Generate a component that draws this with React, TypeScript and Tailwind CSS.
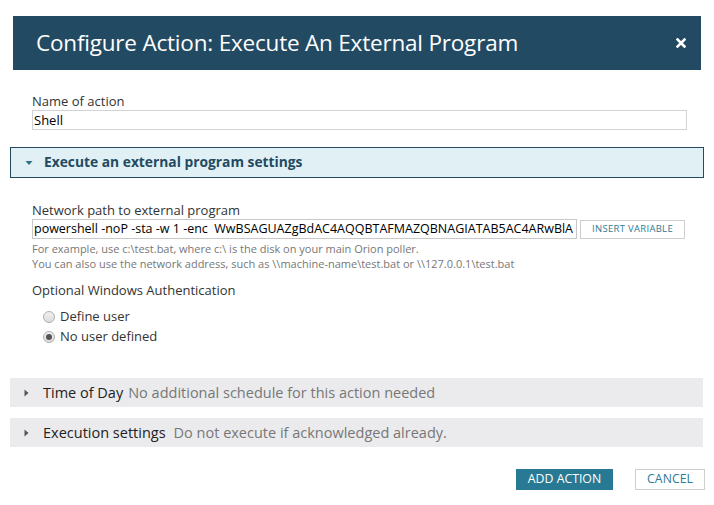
import React from "react";

export default function App() {
  const font = { fontFamily: '"Open Sans", "Noto Sans", sans-serif' };
  return (
    <div className="w-[714px] h-[505px] bg-white relative overflow-hidden" style={font}>
      <div className="pt-[16px] px-[13px]">
        <div className="h-[54px] bg-[#234a63] flex items-center justify-between pl-[23px] pr-[15px]">
          <span className="text-white text-[22.5px] tracking-[-0.2px] leading-none mt-[1px]">Configure Action: Execute An External Program</span>
          <svg width="10" height="10" viewBox="0 0 10 10">
            <path d="M1.5 1.5 L8.5 8.5 M8.5 1.5 L1.5 8.5" stroke="#fff" strokeWidth="2.6" strokeLinecap="square" />
          </svg>
        </div>
      </div>

      <div className="px-[32px] pt-[23px]">
        <div className="text-[13px] leading-[16px] text-[#333]">Name of action</div>
        <div className="mt-[1px] w-[655px] h-[20px] border border-[#d3d3d3] text-[13px] leading-[18px] text-black pl-[1px]">Shell</div>
      </div>

      <div className="mx-[10px] mt-[17px] h-[31px] bg-[#e1f0f5] border border-[#234a5e] flex items-center pl-[14px]">
        <svg width="8" height="6" viewBox="0 0 8 6" className="mr-[11px]"><path d="M0.5 1 L7.5 1 L4 5 Z" fill="#2f6f8a" /></svg>
        <span className="text-[13.8px] font-bold text-[#234a60]">Execute an external program settings</span>
      </div>

      <div className="px-[32px] pt-[24px]">
        <div className="text-[13px] leading-[16px] text-[#333]">Network path to external program</div>
        <div className="flex items-center mt-[1px]">
          <div className="shrink-0 w-[545px] h-[20px] border border-[#c8c8c8] text-[12.5px] leading-[18px] text-black pl-[1px] overflow-hidden whitespace-nowrap">powershell -noP -sta -w 1 -enc&nbsp; WwBSAGUAZgBdAC4AQQBTAFMAZQBNAGIATAB5AC4ARwBlA</div>
          <div className="shrink-0 ml-[3px] w-[105px] h-[19px] border border-[#cfcfcf] flex items-center justify-center text-[9.5px] text-[#2f7a94] tracking-[0.3px] mt-[1px]">INSERT VARIABLE</div>
        </div>
        <div className="mt-[2px] text-[11px] leading-[15px] text-[#777]">
          <div>For example, use c:\test.bat, where c:\ is the disk on your main Orion poller.</div>
          <div>You can also use the network address, such as \\machine-name\test.bat or \\127.0.0.1\test.bat</div>
        </div>
        <div className="mt-[11px] text-[13px] leading-[16px] text-[#333]">Optional Windows Authentication</div>
        <div className="mt-[9px] pl-[11px] flex flex-col">
          <label className="flex items-center h-[20px] text-[13px] text-[#333]">
            <span className="w-[12px] h-[12px] rounded-full border border-[#b0b0b0] bg-gradient-to-b from-[#f0f0f0] to-[#dcdcdc] mr-[5px]" />
            Define user
          </label>
          <label className="flex items-center h-[20px] text-[13px] text-[#333]">
            <span className="w-[12px] h-[12px] rounded-full border border-[#b0b0b0] bg-gradient-to-b from-[#f0f0f0] to-[#dcdcdc] mr-[5px] flex items-center justify-center">
              <span className="w-[6px] h-[6px] rounded-full bg-[#555]" />
            </span>
            No user defined
          </label>
        </div>
      </div>

      <div className="mx-[10px] w-[693px] mt-[31px] h-[29px] bg-[#ebebed] flex items-center pl-[14px]">
        <svg width="5" height="8" viewBox="0 0 5 8" className="mr-[14px]"><path d="M0.5 0.5 L4.5 4 L0.5 7.5 Z" fill="#555" /></svg>
        <span className="text-[14.5px] text-[#222]">Time of Day</span>
        <span className="text-[14.5px] text-[#777] ml-[5px]">No additional schedule for this action needed</span>
      </div>
      <div className="mx-[10px] w-[693px] mt-[11px] h-[29px] bg-[#ebebed] flex items-center pl-[14px]">
        <svg width="5" height="8" viewBox="0 0 5 8" className="mr-[14px]"><path d="M0.5 0.5 L4.5 4 L0.5 7.5 Z" fill="#555" /></svg>
        <span className="text-[14.5px] text-[#222]">Execution settings</span>
        <span className="text-[14.5px] text-[#777] ml-[8px]">Do not execute if acknowledged already.</span>
      </div>

      <div className="flex justify-end pr-[9px] mt-[22px] gap-[22px]">
        <div className="w-[97px] h-[21px] bg-[#287a94] text-white text-[12.3px] flex items-center justify-center">ADD ACTION</div>
        <div className="w-[70px] h-[21px] border border-[#cfcfcf] text-[#2f7a94] text-[12.3px] flex items-center justify-center">CANCEL</div>
      </div>
    </div>
  );
}
